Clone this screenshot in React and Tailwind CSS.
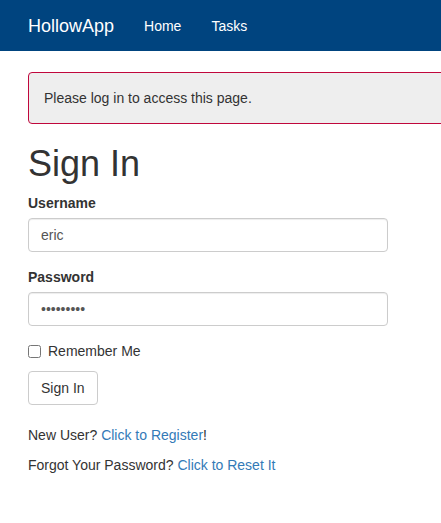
import { useState } from "react";

const App = () => {
  const [form, setForm] = useState({ username: "eric", password: "123456789", remember: false });

  const handleChange = (e) => {
    const { name, value, type, checked } = e.target;
    setForm((prev) => ({ ...prev, [name]: type === "checkbox" ? checked : value }));
  };

  return (
    <div className="min-h-screen bg-white overflow-hidden text-[14px] leading-[20px] text-[#333] font-['Liberation_Sans',Arial,sans-serif]">
      {/* Navbar */}
      <nav className="h-[51px] bg-[#00447f] flex items-center px-[28px]">
        <span className="text-[18px] text-white mr-[30px]">HollowApp</span>
        <a className="text-white mr-[30px]">Home</a>
        <a className="text-white">Tasks</a>
      </nav>

      <main className="px-[28px] pt-[21px]">
        {/* Alert */}
        <div className="w-[460px] border border-[#c0073c] bg-[#eeeeee] rounded-[4px] px-[15px] py-[15px] mb-[20px]">
          Please log in to access this page.
        </div>

        <h1 className="text-[36px] leading-[40px] text-[#333] mt-[20px] mb-[9px]">Sign In</h1>

        <form className="w-[360px]" onSubmit={(e) => e.preventDefault()}>
          {/* Username */}
          <div className="mb-[15px]">
            <label className="block font-bold mb-[5px]">Username</label>
            <input
              type="text"
              name="username"
              value={form.username}
              onChange={handleChange}
              className="w-full h-[34px] border border-[#ccc] rounded-[4px] px-[12px] text-[#555] shadow-[inset_0_1px_1px_rgba(0,0,0,0.075)] outline-none"
            />
          </div>

          {/* Password */}
          <div className="mb-[15px]">
            <label className="block font-bold mb-[5px]">Password</label>
            <input
              type="password"
              name="password"
              value={form.password}
              onChange={handleChange}
              className="w-full h-[34px] border border-[#ccc] rounded-[4px] px-[12px] text-[#555] shadow-[inset_0_1px_1px_rgba(0,0,0,0.075)] outline-none"
            />
          </div>

          {/* Remember */}
          <label className="flex items-center mt-[14px] mb-[10px]">
            <input
              type="checkbox"
              name="remember"
              checked={form.remember}
              onChange={handleChange}
              className="w-[13px] h-[13px] m-0 mr-[7px]"
            />
            Remember Me
          </label>

          <button
            type="submit"
            className="h-[34px] px-[12px] border border-[#ccc] rounded-[4px] bg-white text-[#333]"
          >
            Sign In
          </button>
        </form>

        <p className="mt-[20px] mb-[10px]">
          New User? <a className="text-[#337ab7]">Click to Register</a>!
        </p>
        <p>
          Forgot Your Password? <a className="text-[#337ab7]">Click to Reset It</a>
        </p>
      </main>
    </div>
  );
};

export default App;
